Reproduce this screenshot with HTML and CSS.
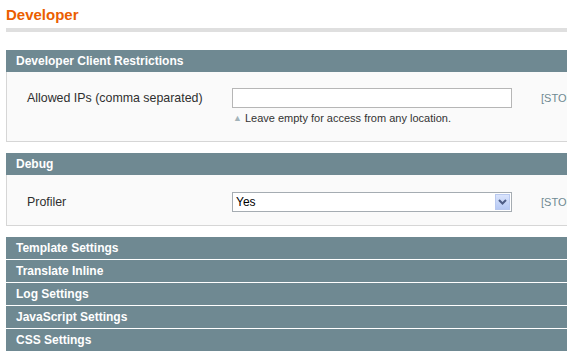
FILE: index.html
```html
<!DOCTYPE html>
<html>
<head>
<meta charset="utf-8">
<link rel="stylesheet" href="styles.css">
</head>
<body>
<div class="page">
  <div class="content-header">
    <h3 class="page-title">Developer</h3>
  </div>

  <div class="section">
    <div class="section-head">Developer Client Restrictions</div>
    <div class="section-body body-ips">
      <div class="row">
        <div class="label">Allowed IPs (comma separated)</div>
        <div class="value">
          <input type="text" class="input-text" value="">
          <p class="note"><span class="tri">&#9650;</span>Leave empty for access from any location.</p>
        </div>
        <div class="scope">[STORE VIEW]</div>
      </div>
    </div>
  </div>

  <div class="section">
    <div class="section-head">Debug</div>
    <div class="section-body body-debug">
      <div class="row">
        <div class="label">Profiler</div>
        <div class="value">
          <div class="select-wrap">
            <select class="select"><option>Yes</option><option>No</option></select>
            <span class="select-btn"><svg width="9" height="6" viewBox="0 0 9 6"><path d="M1 1 L4.5 4.5 L8 1" fill="none" stroke="#4d5d86" stroke-width="2"/></svg></span>
          </div>
        </div>
        <div class="scope">[STORE VIEW]</div>
      </div>
    </div>
  </div>

  <div class="collapsed">
    <div class="section-head">Template Settings</div>
    <div class="section-head">Translate Inline</div>
    <div class="section-head">Log Settings</div>
    <div class="section-head">JavaScript Settings</div>
    <div class="section-head">CSS Settings</div>
  </div>
</div>
</body>
</html>
```

FILE: styles.css
```css
html, body {
  margin: 0;
  padding: 0;
  overflow: hidden;
  background: #fff;
}
body {
  font-family: "Liberation Sans", Arial, sans-serif;
  font-size: 12px;
  color: #2f2f2f;
}
.page {
  padding-left: 6px;
  width: 760px;
}
.content-header {
  border-bottom: 4px solid #dfdfdf;
  padding-top: 6px;
  box-sizing: border-box;
  margin-bottom: 18px;
  height: 32px;
}
.page-title {
  margin: 0;
  font-size: 15px;
  line-height: 18px;
  font-weight: bold;
  color: #eb5e00;
}
.section {
  margin-bottom: 11px;
}
.section-head {
  background: #6f8992;
  color: #fff;
  font-weight: bold;
  font-size: 12px;
  height: 22px;
  line-height: 22px;
  padding-left: 10px;
}
.section-body {
  background: #fafafa;
  border: 1px solid #d6d6d6;
  border-top: 0;
  padding-left: 20px;
}
.body-ips {
  padding-top: 16px;
  box-sizing: border-box;
  height: 70px;
}
.body-debug {
  padding-top: 17px;
  height: 51px;
  box-sizing: border-box;
}
.row {
  display: flex;
  align-items: flex-start;
}
.label {
  width: 205px;
  line-height: 20px;
  font-size: 12.4px;
}
.value {
  width: 280px;
}
.input-text {
  display: block;
  box-sizing: border-box;
  width: 280px;
  height: 20px;
  margin: 0;
  border: 1px solid #b6b6b6;
  background: #fff;
  font-family: inherit;
  font-size: 12px;
  padding: 1px 3px;
}
.note {
  margin: 0;
  padding-top: 3px;
  font-size: 11px;
  line-height: 14px;
  color: #333;
}
.tri {
  color: #a3b3b9;
  font-size: 9px;
  vertical-align: 1px;
  margin-left: 1px;
  margin-right: 3px;
}
.scope {
  margin-left: 29px;
  color: #6f8992;
  font-size: 11px;
  line-height: 20px;
  white-space: nowrap;
}
.select-wrap {
  position: relative;
  width: 280px;
  height: 20px;
}
.select {
  appearance: none;
  -webkit-appearance: none;
  display: block;
  box-sizing: border-box;
  width: 280px;
  height: 20px;
  margin: 0;
  border: 1px solid #a5acb2;
  background: #fff;
  font-family: inherit;
  font-size: 12px;
  color: #000;
  padding: 0 3px;
  border-radius: 0;
}
.select-btn {
  position: absolute;
  right: 2px;
  top: 2px;
  width: 15px;
  height: 16px;
  box-sizing: border-box;
  border: 1px solid #b9c9ef;
  background: linear-gradient(#dae4fc, #b6c9f4);
  display: flex;
  align-items: center;
  justify-content: center;
}
.collapsed .section-head {
  margin-bottom: 1px;
}
```
